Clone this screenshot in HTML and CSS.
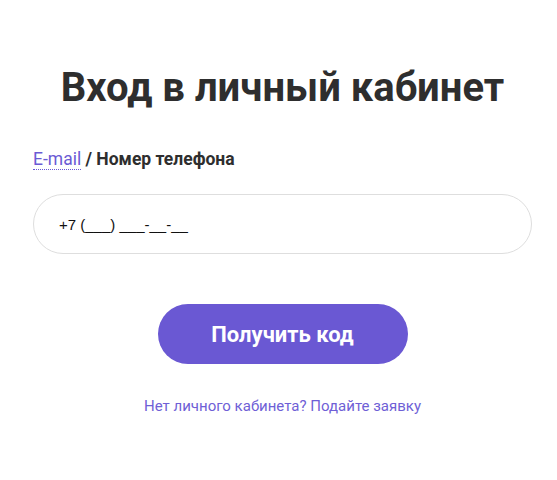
FILE: index.html
```html
<!DOCTYPE html>
<html lang="ru">
<head>
<meta charset="utf-8">
<link rel="stylesheet" href="styles.css">
</head>
<body>
<main class="login">
  <h1 class="title">Вход в личный кабинет</h1>
  <div class="switch">
    <a class="switch-link" href="#">E-mail</a> <span class="switch-sep">/</span> <span class="switch-active">Номер телефона</span>
  </div>
  <div class="field">
    <span class="field-value">+7 (___) ___-__-__</span>
  </div>
  <div class="actions">
    <button class="btn" type="button">Получить код</button>
  </div>
  <div class="footer">
    <a class="footer-link" href="#">Нет личного кабинета? Подайте заявку</a>
  </div>
</main>
</body>
</html>
```
FILE: styles.css
```css
html, body {
  margin: 0;
  padding: 0;
  background: #ffffff;
}
body {
  font-family: Roboto, "Noto Sans", sans-serif;
  color: #2e2e2e;
}
.login {
  width: 499px;
  margin: 0 auto;
  padding: 64px 0 0 8px;
  display: flex;
  flex-direction: column;
}
.title {
  margin: 0;
  font-size: 40px;
  line-height: 48px;
  font-weight: 700;
  text-align: center;
  color: #2e2e2e;
}
.switch {
  margin-top: 37px;
  font-size: 17.5px;
  line-height: 20px;
}
.switch-link {
  color: #6a5ad4;
  text-decoration: none;
  border-bottom: 1px dotted #6a5ad4;
}
.switch-sep,
.switch-active {
  font-weight: 700;
  color: #2e2e2e;
}
.field {
  margin-top: 25px;
  height: 58px;
  border: 1px solid #dedede;
  border-radius: 30px;
  display: flex;
  align-items: center;
  padding-left: 25px;
}
.field-value {
  font-family: "Liberation Sans", Arial, sans-serif;
  font-size: 15px;
  color: #111111;
}
.actions {
  margin-top: 50px;
  display: flex;
  justify-content: center;
}
.btn {
  width: 250px;
  height: 60px;
  border: 0;
  border-radius: 30px;
  background: #6a58d3;
  color: #ffffff;
  font-family: Roboto, sans-serif;
  font-size: 22px;
  font-weight: 700;
  cursor: pointer;
}
.footer {
  margin-top: 33px;
  text-align: center;
  font-size: 15px;
  line-height: 18px;
}
.footer-link {
  color: #6f5fd6;
  text-decoration: none;
}
```
